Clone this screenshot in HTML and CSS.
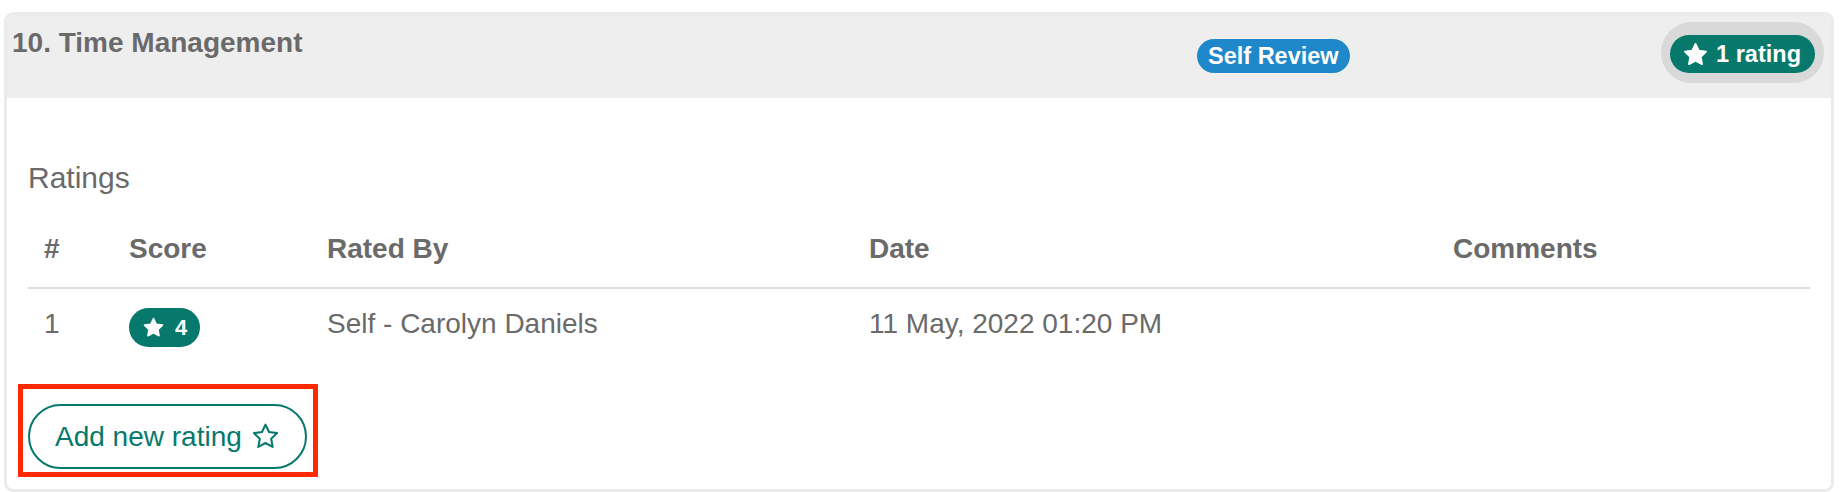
FILE: index.html
```html
<!DOCTYPE html>
<html lang="en">
<head>
<meta charset="utf-8">
<title>Time Management</title>
<link rel="stylesheet" href="styles.css">
</head>
<body>
<section class="card">
  <header class="card-header">
    <h3 class="card-title">10. Time Management</h3>
    <span class="badge badge-blue">Self Review</span>
    <span class="ring">
      <span class="badge badge-green badge-lg">
        <svg class="star-fill" viewBox="0 0 24 24" aria-hidden="true"><polygon points="12,2.6 14.9,8.6 21.4,9.5 16.7,14.1 17.8,20.6 12,17.5 6.2,20.6 7.3,14.1 2.6,9.5 9.1,8.6"/></svg>
        1 rating
      </span>
    </span>
  </header>
  <div class="card-body">
    <h4 class="section-title">Ratings</h4>
    <table class="ratings">
      <thead>
        <tr>
          <th class="c-num">#</th>
          <th class="c-score">Score</th>
          <th class="c-by">Rated By</th>
          <th class="c-date">Date</th>
          <th class="c-comments">Comments</th>
        </tr>
      </thead>
      <tbody>
        <tr>
          <td>1</td>
          <td>
            <span class="badge badge-green badge-score">
              <svg class="star-fill small" viewBox="0 0 24 24" aria-hidden="true"><polygon points="12,2.6 14.9,8.6 21.4,9.5 16.7,14.1 17.8,20.6 12,17.5 6.2,20.6 7.3,14.1 2.6,9.5 9.1,8.6"/></svg>
              4
            </span>
          </td>
          <td>Self - Carolyn Daniels</td>
          <td>11 May, 2022 01:20 PM</td>
          <td></td>
        </tr>
      </tbody>
    </table>
    <div class="action">
      <button class="btn-add" type="button">
        Add new rating
        <svg class="star-line" viewBox="0 0 24 24" aria-hidden="true"><polygon points="12,2.2 14.9,8.3 21.6,9.2 16.7,13.9 17.9,20.6 12,17.4 6.1,20.6 7.3,13.9 2.4,9.2 9.1,8.3"/></svg>
      </button>
      <span class="highlight" aria-hidden="true"></span>
    </div>
  </div>
</section>
</body>
</html>
```

FILE: styles.css
```css
* { box-sizing: border-box; }

html, body {
  margin: 0;
  padding: 0;
  background: #ffffff;
}

body {
  padding: 12px 8px 0 4px;
  font-family: "Liberation Sans", Arial, Helvetica, sans-serif;
  color: #6a6a6a;
}

.card {
  border: 3px solid #ebebeb;
  border-radius: 9px;
  overflow: hidden;
  background: #ffffff;
}

.card-header {
  display: grid;
  grid-template-columns: 1185px 1fr auto;
  align-items: start;
  background: #eeeeee;
  padding: 7px 7px 15px 5px;
}

.card-title {
  margin: 5px 0 0;
  font-size: 28px;
  line-height: 32px;
  font-weight: 700;
  color: #6a6a6a;
}

.badge {
  display: inline-flex;
  align-items: center;
  color: #ffffff;
  font-weight: 700;
  font-size: 23.5px;
  white-space: nowrap;
}

.badge-blue {
  justify-self: start;
  margin-top: 17px;
  height: 34px;
  padding: 0 11px;
  border-radius: 17px;
  background: #1f88ca;
}

.ring {
  display: inline-flex;
  padding: 13px 9px 10px 9px;
  background: #d9d9d9;
  border-radius: 32px;
}

.badge-green {
  background: #06796c;
}

.badge-lg {
  height: 38px;
  padding: 0 14px 0 12px;
  border-radius: 19px;
  gap: 7px;
}

.star-fill {
  width: 27px;
  height: 27px;
  fill: #ffffff;
  stroke: #ffffff;
  stroke-width: 1.6;
  stroke-linejoin: round;
}

.star-fill.small {
  width: 23px;
  height: 23px;
}

.card-body {
  padding: 62px 21px 20px 21px;
}

.section-title {
  margin: 0;
  font-size: 30px;
  line-height: 36px;
  font-weight: 400;
  color: #6a6a6a;
}

.ratings {
  width: 100%;
  margin-top: 17px;
  border-collapse: collapse;
  table-layout: fixed;
  font-size: 28px;
  line-height: 32px;
  color: #6a6a6a;
}

.ratings th {
  text-align: left;
  font-weight: 700;
  padding: 20px 0 22px 16px;
  border-bottom: 2px solid #dedede;
  vertical-align: top;
}

.ratings td {
  padding: 19px 0 19px 16px;
  vertical-align: top;
}

.c-num { width: 85px; }
.c-score { width: 198px; }
.c-by { width: 542px; }
.c-date { width: 584px; }

.badge-score {
  vertical-align: middle;
  height: 39px;
  padding: 0 13px 0 13px;
  border-radius: 20px;
  gap: 10px;
  font-size: 22px;
}

.action {
  position: relative;
  display: inline-block;
  margin-top: 38px;
  vertical-align: top;
}

.btn-add {
  display: inline-flex;
  align-items: center;
  gap: 9px;
  height: 65px;
  margin: 0;
  padding: 0 25px 0 25px;
  border: 2px solid #06796c;
  border-radius: 33px;
  background: #ffffff;
  color: #06796c;
  font-family: inherit;
  font-size: 28px;
  line-height: 32px;
  cursor: pointer;
}

.star-line {
  width: 29px;
  height: 29px;
  fill: none;
  stroke: #06796c;
  stroke-width: 1.7;
  stroke-linejoin: round;
}

.highlight {
  position: absolute;
  top: -20px;
  left: -10px;
  right: -11px;
  bottom: -8px;
  border: 5px solid #ff2a00;
  pointer-events: none;
}
```
